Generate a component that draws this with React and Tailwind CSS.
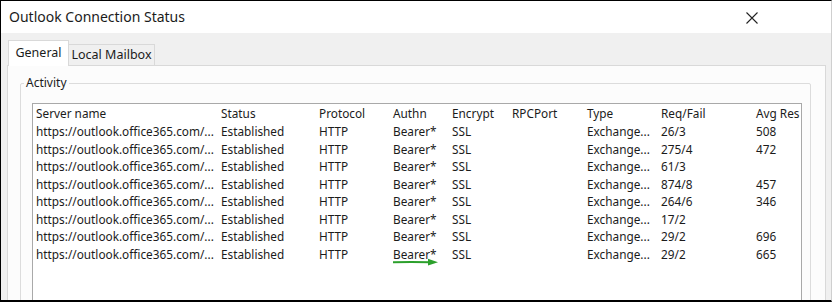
const rows = [
  ['26/3', '508'],
  ['275/4', '472'],
  ['61/3', ''],
  ['874/8', '457'],
  ['264/6', '346'],
  ['17/2', ''],
  ['29/2', '696'],
  ['29/2', '665'],
];

const cols = 'grid grid-cols-[185px_98px_74px_59px_60px_75px_74px_95px_1fr] pl-[3px]';

export default function App() {
  return (
    <div className="w-[832px] h-[302px] overflow-hidden border-t border-l border-b-2 border-black border-r border-r-[#cfcfcf] bg-[#f0f0f0] text-[#1b1b1b] font-['Noto_Sans',sans-serif] flex flex-col">
      {/* title bar */}
      <div className="h-[32px] shrink-0 bg-white flex items-center justify-between pl-[8px] pr-[73px]">
        <span className="text-[14px] leading-none">Outlook Connection Status</span>
        <svg width="12" height="12" viewBox="0 0 12 12" className="mt-[1px]">
          <path d="M0.5 0.5L11.5 11.5M11.5 0.5L0.5 11.5" stroke="#222" strokeWidth="1.1" />
        </svg>
      </div>

      <div className="flex flex-col px-[6px] pt-[7px] pr-[5px]">
        {/* tabs */}
        <div className="flex items-end h-[25px] relative z-10 pl-[1px]">
          <div className="h-[26px] w-[61px] bg-white border border-b-0 border-[#d9d9d9] flex items-center justify-center text-[12.5px] -mb-[1px]">
            General
          </div>
          <div className="h-[21px] w-[86px] bg-[#f0f0f0] border border-l-0 border-b-0 border-[#d9d9d9] flex items-center justify-center text-[12.5px]">
            Local Mailbox
          </div>
        </div>

        {/* tab panel */}
        <div className="bg-[#fcfcfc] border border-[#d9d9d9] pl-[12px] pr-[14px] pt-[17px]">
          {/* group box */}
          <div className="relative border border-[#dcdcdc] rounded-[2px] pl-[11px] pr-[8px] pt-[19px]">
            <span className="absolute -top-[9px] left-[3px] bg-[#fcfcfc] px-[2px] text-[12px] leading-[16px]">
              Activity
            </span>
            <div className="h-[240px] bg-white border border-[#a9a9a9] text-[11.8px]">
              <div className={`${cols} h-[19px] items-center`}>
                <span>Server name</span>
                <span>Status</span>
                <span>Protocol</span>
                <span>Authn</span>
                <span>Encrypt</span>
                <span>RPCPort</span>
                <span>Type</span>
                <span>Req/Fail</span>
                <span className="whitespace-nowrap">Avg Res</span>
              </div>
              {rows.map(([req, avg], i) => (
                <div key={i} className={`${cols} h-[17.5px] items-center`}>
                  <span className="whitespace-nowrap">https://outlook.office365.com/...</span>
                  <span>Established</span>
                  <span>HTTP</span>
                  <span className="relative">
                    Bearer*
                    {i === rows.length - 1 && (
                      <svg width="48" height="8" viewBox="0 0 48 8" className="absolute left-0 top-[12px]">
                        <path d="M0 4.2Q18 3.6 37 4.2" stroke="#2ca02c" strokeWidth="2" fill="none" />
                        <path d="M35 0.8L45 4.2L35 7.4Z" fill="#2ca02c" />
                      </svg>
                    )}
                  </span>
                  <span>SSL</span>
                  <span></span>
                  <span>Exchange...</span>
                  <span>{req}</span>
                  <span>{avg}</span>
                </div>
              ))}
            </div>
          </div>
        </div>
      </div>
    </div>
  );
}
